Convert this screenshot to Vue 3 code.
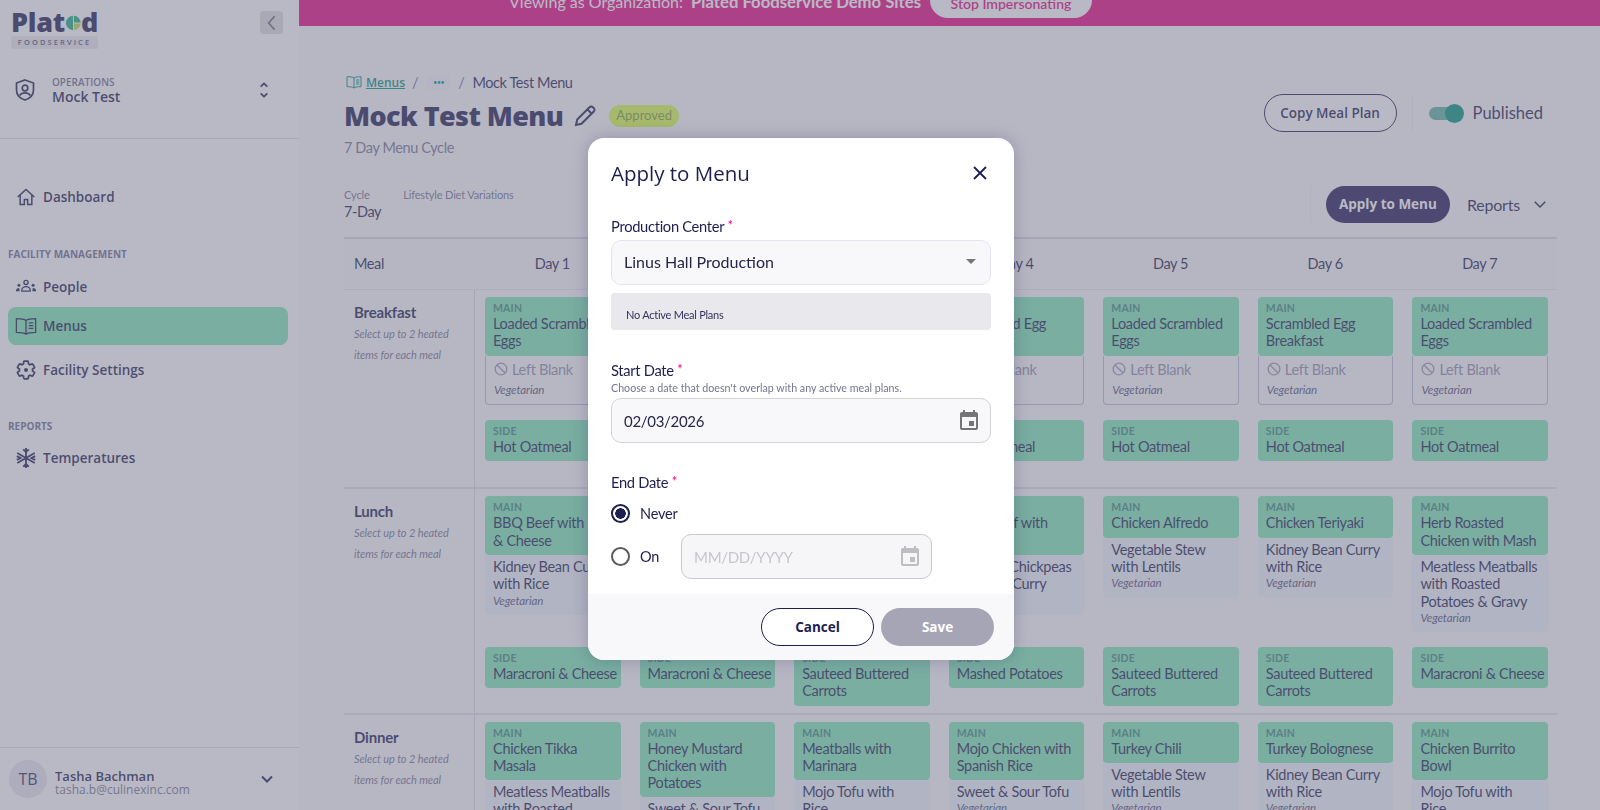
<script setup>
const days = [1, 2, 3, 4, 5, 6, 7];

const blank = { blank: true, veg: true };
const alt = (name, veg = true) => ({ name, veg });

const meals = [
  {
    name: "Breakfast",
    mains: [
      { name: "Loaded Scrambled Eggs", alt: blank },
      { name: "Loaded Scrambled Eggs", alt: blank },
      { name: "Scrambled Egg Breakfast", alt: blank },
      { name: "Scrambled Egg Breakfast", alt: blank },
      { name: "Loaded Scrambled Eggs", alt: blank },
      { name: "Scrambled Egg Breakfast", alt: blank },
      { name: "Loaded Scrambled Eggs", alt: blank },
    ],
    sides: ["Hot Oatmeal", "Hot Oatmeal", "Hot Oatmeal with Berries", "Hot Oatmeal", "Hot Oatmeal", "Hot Oatmeal", "Hot Oatmeal"],
  },
  {
    name: "Lunch",
    mains: [
      { name: "BBQ Beef with Mac & Cheese", alt: alt("Kidney Bean Curry with Rice") },
      { name: "Chicken Alfredo", alt: alt("Vegetable Stew with Lentils") },
      { name: "Chicken Teriyaki", alt: alt("Kidney Bean Curry with Rice") },
      { name: "BBQ Beef with Peppers", alt: alt("Roasted Chickpeas Coconut Curry") },
      { name: "Chicken Alfredo", alt: alt("Vegetable Stew with Lentils") },
      { name: "Chicken Teriyaki", alt: alt("Kidney Bean Curry with Rice") },
      { name: "Herb Roasted Chicken with Mash", alt: alt("Meatless Meatballs with Roasted Potatoes & Gravy") },
    ],
    sides: ["Maracroni & Cheese", "Maracroni & Cheese", "Sauteed Buttered Carrots", "Mashed Potatoes", "Sauteed Buttered Carrots", "Sauteed Buttered Carrots", "Maracroni & Cheese"],
  },
  {
    name: "Dinner",
    mains: [
      { name: "Chicken Tikka Masala", alt: alt("Meatless Meatballs with Roasted Potatoes") },
      { name: "Honey Mustard Chicken with Potatoes", alt: alt("Sweet & Sour Tofu") },
      { name: "Meatballs with Marinara", alt: alt("Mojo Tofu with Rice") },
      { name: "Mojo Chicken with Spanish Rice", alt: alt("Sweet & Sour Tofu") },
      { name: "Turkey Chili", alt: alt("Vegetable Stew with Lentils") },
      { name: "Turkey Bolognese", alt: alt("Kidney Bean Curry with Rice") },
      { name: "Chicken Burrito Bowl", alt: alt("Mojo Tofu with Rice") },
    ],
    sides: [],
  },
];
</script>

<template>
  <div class="app">
    <aside class="sidebar">
      <div class="brand">
        <div class="logo">
          <div class="logo-word">
            Plat<svg class="logo-e" viewBox="0 0 20 20">
              <path d="M9.4 0.5A9.5 9.5 0 0 0 9.4 19.5Z" fill="#1fae85" />
              <path d="M10.6 0.5A9.5 9.5 0 0 1 19.5 9.4H10.6Z" fill="#1fae85" />
              <path d="M10.6 10.6H19.5A9.5 9.5 0 0 1 10.6 19.5Z" fill="#b9dc4a" />
            </svg>d
          </div>
          <div class="logo-tag">FOODSERVICE</div>
        </div>
        <button class="collapse">
          <svg viewBox="0 0 24 24" width="20" height="20" fill="none" stroke="#6b6b80" stroke-width="2"><path d="M15 4l-7 8 7 8" /></svg>
        </button>
      </div>

      <div class="org">
        <svg class="org-icon" viewBox="0 0 24 24" width="24" height="24" fill="none" stroke="#1e1e50" stroke-width="1.7">
          <path d="M12 2l8.5 3v7c0 5-3.5 8.4-8.5 10-5-1.6-8.5-5-8.500-10V5z" />
          <circle cx="12" cy="10" r="2.8" />
          <path d="M6.5 17.5c1.500-2 3.500-2.700 5.500-2.700s4 .7 5.500 2.700" />
        </svg>
        <div class="org-text">
          <div class="org-label">OPERATIONS</div>
          <div class="org-name">Mock Test</div>
        </div>
        <svg class="org-sort" viewBox="0 0 12 24" width="10" height="20" fill="none" stroke="#1e1e50" stroke-width="2"><path d="M2 8l4-4 4 4M2 16l4 4 4-4" /></svg>
      </div>

      <nav class="nav">
        <a class="nav-item dash">
          <svg viewBox="0 0 24 24" width="20" height="20" fill="none" stroke="#1e1e50" stroke-width="1.8"><path d="M2 12L12 3l10 9M5 10v11h5v-6h4v6h5V10" /></svg>
          Dashboard
        </a>
        <div class="nav-head">FACILITY MANAGEMENT</div>
        <a class="nav-item">
          <svg viewBox="0 0 24 24" width="24" height="20" fill="#1e1e50">
            <circle cx="12" cy="6.5" r="2.5" fill="none" stroke="#1e1e50" stroke-width="1.6" />
            <path d="M7 17v-1.500c0-2.500 2.500-4 5-4s5 1.500 5 4V17z" fill="none" stroke="#1e1e50" stroke-width="1.6" />
            <circle cx="3.5" cy="10" r="1.8" /><circle cx="20.5" cy="10" r="1.8" />
            <path d="M0 17v-1c0-1.500 1.500-2.800 3.800-2.800L4.500 17zM24 17v-1c0-1.500-1.500-2.800-3.800-2.800L19.500 17z" />
          </svg>
          People
        </a>
        <a class="nav-item active">
          <svg viewBox="0 0 24 24" width="24" height="22" fill="none" stroke="#1e1e50" stroke-width="1.4"><path d="M12 6C10 4.500 6 4 1.500 4v15c4.500 0 8.500.5 10.500 2 2-1.500 6-2 10.500-2V4C18 4 14 4.500 12 6zM12 6v15M15 8.500h5M15 11.500h5M15 14.500h5" /></svg>
          Menus
        </a>
        <a class="nav-item">
          <svg viewBox="0 0 24 24" width="22" height="22" fill="none" stroke="#1e1e50" stroke-width="1.9">
            <path d="M19.14,12.94c0.04-0.3,0.06-0.61,0.06-0.94c0-0.32-0.02-0.64-0.07-0.94l2.03-1.58c0.18-0.14,0.23-0.41,0.12-0.61l-1.92-3.32c-0.12-0.22-0.37-0.29-0.59-0.22l-2.39,0.96c-0.5-0.38-1.03-0.7-1.62-0.94L14.4,2.81c-0.04-0.24-0.24-0.41-0.48-0.41h-3.84c-0.24,0-0.43,0.17-0.47,0.41L9.25,5.35C8.66,5.59,8.12,5.92,7.63,6.29L5.24,5.33c-0.22-0.08-0.47,0-0.59,0.22L2.74,8.87C2.62,9.08,2.66,9.34,2.86,9.48l2.03,1.58C4.84,11.36,4.8,11.69,4.8,12s0.02,0.64,0.07,0.94l-2.03,1.58c-0.18,0.14-0.23,0.41-0.12,0.61l1.92,3.32c0.12,0.22,0.37,0.29,0.59,0.22l2.39-0.96c0.5,0.38,1.03,0.7,1.62,0.94l0.36,2.54c0.05,0.24,0.24,0.41,0.48,0.41h3.84c0.24,0,0.44-0.17,0.47-0.41l0.36-2.54c0.59-0.24,1.13-0.56,1.62-0.94l2.39,0.96c0.22,0.08,0.47,0,0.59-0.22l1.92-3.32c0.12-0.22,0.07-0.47-0.12-0.61L19.14,12.94z" />
            <circle cx="12" cy="12" r="2.2" fill="#1e1e50" stroke="none" />
          </svg>
          Facility Settings
        </a>
        <div class="nav-head reports">REPORTS</div>
        <a class="nav-item">
          <svg viewBox="0 0 24 24" width="22" height="22" fill="none" stroke="#1e1e50" stroke-width="2">
            <path d="M12 1v22M2.500 6.500l19 11M21.500 6.500l-19 11M9 2.500l3 3 3-3M9 21.500l3-3 3 3M2 10l4 2-4 2M22 10l-4 2 4 2" />
          </svg>
          Temperatures
        </a>
      </nav>

      <div class="user">
        <div class="avatar">TB</div>
        <div class="user-text">
          <div class="user-name">Tasha Bachman</div>
          <div class="user-mail">tasha.b@culinexinc.com</div>
        </div>
        <svg viewBox="0 0 24 24" width="20" height="20" fill="none" stroke="#1e1e50" stroke-width="2.4"><path d="M6 9l6 6 6-6" /></svg>
      </div>
    </aside>

    <main class="main">
      <div class="banner">
        <span>Viewing as Organization:</span>
        <b>Plated Foodservice Demo Sites</b>
        <button class="stop">Stop Impersonating</button>
      </div>

      <div class="content">
        <header class="head">
          <div>
            <div class="crumbs">
              <svg viewBox="0 0 24 24" width="16" height="16" fill="none" stroke="#04947c" stroke-width="1.5"><path d="M12 6C10 4.500 6 4 1.500 4v15c4.500 0 8.500.5 10.500 2 2-1.500 6-2 10.500-2V4C18 4 14 4.500 12 6zM12 6v15M15 9h5M15 12h5M15 15h5" /></svg>
              <a class="crumb-link">Menus</a>
              <span class="slash">/</span>
              <span class="more">•••</span>
              <span class="slash">/</span>
              <span>Mock Test Menu</span>
            </div>
            <div class="title-row">
              <h1>Mock Test Menu</h1>
              <svg class="pencil" viewBox="0 0 24 24" width="24" height="24" fill="none" stroke="#1e1e50" stroke-width="2"><path d="M3 21l1.200-5.500L16.500 3.200a2.400 2.400 0 0 1 3.400 0l.9.9a2.400 2.400 0 0 1 0 3.400L8.500 19.800zM14.500 5.500l4 4" /></svg>
              <span class="pill">Approved</span>
            </div>
            <div class="subtitle">7 Day Menu Cycle</div>
          </div>
          <div class="head-actions">
            <button class="btn-outline">Copy Meal Plan</button>
            <span class="sep"></span>
            <div class="toggle"><span class="thumb"></span></div>
            <span class="published">Published</span>
          </div>
        </header>

        <div class="info-row">
          <div class="info">
            <div>
              <div class="info-label">Cycle</div>
              <div class="info-value">7-Day</div>
            </div>
            <div class="info-label">Lifestyle Diet Variations</div>
          </div>
          <div class="info-actions">
            <button class="btn-primary">Apply to Menu</button>
            <span class="reports-link">Reports</span>
            <svg viewBox="0 0 24 24" width="18" height="18" fill="none" stroke="#1e1e50" stroke-width="2"><path d="M5 9l7 7 7-7" /></svg>
          </div>
        </div>

        <div class="plan">
          <div class="plan-row plan-head">
            <div class="head-meal">Meal</div>
            <div v-for="d in days" :key="d" class="head-day">Day {{ d }}</div>
          </div>

          <div v-for="meal in meals" :key="meal.name" class="plan-row meal-row">
            <div class="meal-cell">
              <div class="meal-name">{{ meal.name }}</div>
              <div class="meal-hint">Select up to 2 heated items for each meal</div>
            </div>
            <div v-for="(m, i) in meal.mains" :key="i" class="cell main-cell">
              <div class="dish">
                <div class="dish-type">MAIN</div>
                <div class="dish-name">{{ m.name }}</div>
              </div>
              <div class="alt" :class="{ blank: m.alt.blank }">
                <div v-if="m.alt.blank" class="alt-name blank-name">
                  <svg viewBox="0 0 24 24" width="14" height="14" fill="none" stroke="#9c9cb2" stroke-width="2.4"><circle cx="12" cy="12" r="10" /><path d="M5 5l14 14" /></svg>
                  Left Blank
                </div>
                <div v-else class="alt-name">{{ m.alt.name }}</div>
                <div v-if="m.alt.veg" class="veg">Vegetarian</div>
              </div>
            </div>
            <div v-for="(s, i) in meal.sides" :key="'s' + i" class="cell side-cell">
              <div class="dish">
                <div class="dish-type">SIDE</div>
                <div class="dish-name">{{ s }}</div>
              </div>
            </div>
          </div>
        </div>
      </div>
    </main>

    <div class="overlay">
      <section class="modal">
        <div class="modal-body">
          <div class="modal-head">
            <h2>Apply to Menu</h2>
            <svg viewBox="0 0 24 24" width="24" height="24" fill="none" stroke="#1e1e50" stroke-width="1.8"><path d="M6 6l12 12M18 6L6 18" /></svg>
          </div>

          <label class="field-label">Production Center <i>*</i></label>
          <div class="input select">
            <span>Linus Hall Production</span>
            <span class="caret"></span>
          </div>
          <div class="notice">No Active Meal Plans</div>

          <label class="field-label start">Start Date <i>*</i></label>
          <div class="hint">Choose a date that doesn't overlap with any active meal plans.</div>
          <div class="input date">
            <span>02/03/2026</span>
            <svg viewBox="0 0 24 24" width="24" height="24" fill="#757575"><path d="M17 12h-5v5h5v-5zM16 1v2H8V1H6v2H5c-1.110 0-1.990.9-1.990 2L3 19c0 1.100.89 2 2 2h14c1.100 0 2-.9 2-2V5c0-1.100-.9-2-2-2h-1V1h-2zm3 18H5V8h14v11z" /></svg>
          </div>

          <label class="field-label end">End Date <i>*</i></label>
          <div class="radio-row never">
            <span class="radio on"></span>
            <span>Never</span>
          </div>
          <div class="radio-row">
            <span class="radio"></span>
            <span class="on-label">On</span>
            <div class="input date disabled">
              <span>MM/DD/YYYY</span>
              <svg viewBox="0 0 24 24" width="24" height="24" fill="#bdbdc2"><path d="M17 12h-5v5h5v-5zM16 1v2H8V1H6v2H5c-1.110 0-1.990.9-1.990 2L3 19c0 1.100.89 2 2 2h14c1.100 0 2-.9 2-2V5c0-1.100-.9-2-2-2h-1V1h-2zm3 18H5V8h14v11z" /></svg>
            </div>
          </div>
        </div>
        <footer class="modal-foot">
          <button class="btn-cancel">Cancel</button>
          <button class="btn-save">Save</button>
        </footer>
      </section>
    </div>
  </div>
</template>

<style>
html,
body {
  margin: 0;
  overflow: hidden;
}
</style>

<style scoped>
.app {
  display: flex;
  height: 810px;
  overflow: hidden;
  font-family: Lato, "Liberation Sans", sans-serif;
  color: #1e1e50;
  background: #fbfbfd;
}

button {
  font: inherit;
  cursor: pointer;
}

/* sidebar */
.sidebar {
  width: 299px;
  flex: none;
  display: flex;
  flex-direction: column;
  height: 810px;
  background: #ffffff;
  font-family: "Open Sans", sans-serif;
}

.brand {
  display: flex;
  justify-content: space-between;
  padding: 9px 16px 0 11px;
  height: 70px;
  box-sizing: border-box;
}

.logo {
  width: 87px;
}

.logo-word {
  display: flex;
  align-items: center;
  height: 26px;
  font-size: 27px;
  font-weight: 800;
  letter-spacing: -0.3px;
  line-height: 26px;
}

.logo-e {
  width: 16px;
  height: 20px;
  margin: 1px 0 0 1px;
}

.logo-tag {
  margin-top: 1px;
  height: 13px;
  line-height: 13px;
  background: #e8e8ee;
  border-radius: 2px;
  text-align: center;
  font-size: 7.5px;
  font-weight: 600;
  letter-spacing: 2.1px;
  color: #52527a;
}

.collapse {
  width: 23px;
  height: 23px;
  margin-top: 2px;
  padding: 0;
  border: none;
  border-radius: 4px;
  background: #dedee1;
  display: flex;
  align-items: center;
  justify-content: center;
}

.org {
  display: flex;
  align-items: center;
  height: 69px;
  border-bottom: 1px solid #dcdce6;
  padding: 0 30px 28px 13px;
  box-sizing: border-box;
}

.org-icon {
  margin-right: 15px;
}

.org-text {
  flex: 1;
}

.org-label {
  font-size: 10px;
  font-weight: 600;
  color: #6e6e92;
  line-height: 13px;
}

.org-name {
  font-size: 14px;
  font-weight: 600;
  line-height: 16px;
}

.nav {
  flex: 1;
  padding: 0 11px 0 8px;
}

.nav-item {
  display: flex;
  align-items: center;
  height: 37px;
  font-size: 13.5px;
  font-weight: 600;
  padding-left: 7px;
  border-radius: 8px;
}

.nav-item svg {
  width: 22px;
  margin-right: 6px;
  flex: none;
}

.nav-item.dash {
  margin-top: 39px;
  margin-bottom: 33px;
}

.nav-head {
  font-size: 10px;
  font-weight: 700;
  color: #6e6e92;
  line-height: 13px;
}

.nav-head + .nav-item {
  margin-top: 7px;
}

.nav-head.reports {
  margin-top: 32px;
}

.nav-head.reports + .nav-item {
  margin-top: 6px;
}

.nav-item.active {
  background: #7ce9b5;
  margin: 2px 0 6px;
  height: 38px;
}

.user {
  display: flex;
  align-items: center;
  height: 62px;
  border-top: 1px solid #dcdce6;
  padding: 0 22px 0 9px;
}

.avatar {
  width: 38px;
  height: 38px;
  border-radius: 50%;
  background: #e6e6ee;
  font-size: 16px;
  color: #32325f;
  display: flex;
  align-items: center;
  justify-content: center;
  margin-right: 8px;
}

.user-text {
  flex: 1;
  padding-top: 6px;
}

.user-name {
  font-size: 13px;
  font-weight: 600;
  line-height: 14px;
}

.user-mail {
  font-size: 12px;
  color: #757590;
  line-height: 13px;
}

/* main */
.main {
  flex: 1;
  min-width: 0;
  height: 810px;
  overflow: hidden;
}

.banner {
  height: 26px;
  box-sizing: border-box;
  background: #e70a82;
  color: #fff;
  display: flex;
  align-items: flex-end;
  gap: 6px;
  padding: 0 0 8px 210px;
  overflow: hidden;
  font-size: 16px;
  white-space: nowrap;
}

.banner span,
.banner b {
  line-height: 18px;
  margin-bottom: 7px;
}

.banner b {
  margin-left: 2px;
  font-size: 16.7px;
}

.stop {
  flex: none;
  height: 36px;
  width: 162px;
  margin-left: 3px;
  border: none;
  border-radius: 18px;
  background: #fff;
  color: #e70a82;
  font-weight: 600;
  font-size: 14px;
  padding: 0 0 6px;
  display: flex;
  align-items: flex-end;
  justify-content: center;
}

.content {
  padding: 46px 43px 0 45px;
}

.head {
  display: flex;
  justify-content: space-between;
  align-items: flex-start;
}

.crumbs {
  display: flex;
  align-items: center;
  gap: 6px;
  height: 20px;
  font-size: 14.5px;
  letter-spacing: -0.4px;
  padding-left: 2px;
}

.crumb-link {
  color: #04947c;
  text-decoration: underline;
  font-family: "Open Sans", sans-serif;
  font-size: 12px;
  font-weight: 600;
  letter-spacing: 0;
  margin-left: -2px;
}

.slash {
  color: #757590;
  margin: 0 2px 0 1px;
}

.more {
  background: #f4f4f8;
  color: #04947c;
  width: 23px;
  height: 15px;
  font-size: 7px;
  line-height: 15px;
  text-align: center;
  border-radius: 3px;
  margin: 0 1px;
}

.title-row {
  display: flex;
  align-items: center;
  height: 40px;
  margin-top: 4px;
}

h1 {
  margin: 0;
  font-family: "Open Sans", sans-serif;
  font-size: 27px;
  font-weight: 800;
  letter-spacing: -0.6px;
  line-height: 40px;
}

.pencil {
  margin: 0 12px 0 10px;
}

.pill {
  background: #d8ff4a;
  color: #849f40;
  border-radius: 11px;
  height: 22px;
  line-height: 21px;
  padding: 0 7px;
  font-size: 13px;
  margin-top: -1px;
}

.subtitle {
  font-size: 14.5px;
  letter-spacing: -0.4px;
  color: #757590;
  margin-top: 2px;
  line-height: 20px;
}

.head-actions {
  display: flex;
  align-items: center;
  margin-top: 22px;
}

.btn-outline {
  width: 133px;
  height: 38px;
  border: 1px solid #1e1e50;
  border-radius: 19px;
  background: #fff;
  color: #1e1e50;
  font-family: "Open Sans", sans-serif;
  font-size: 13.5px;
  font-weight: 600;
  padding: 0;
}

.sep {
  width: 1px;
  height: 38px;
  background: #eeeef2;
  margin: 0 16px 0 15px;
}

.toggle {
  position: relative;
  width: 31px;
  height: 13px;
  border-radius: 7px;
  background: #5fb3a4;
}

.thumb {
  position: absolute;
  right: -4px;
  top: -3px;
  width: 19px;
  height: 19px;
  border-radius: 50%;
  background: #04947c;
}

.published {
  font-size: 16.5px;
  margin: 0 14px 0 13px;
}

.info-row {
  display: flex;
  justify-content: space-between;
  align-items: flex-start;
  margin-top: 26px;
  height: 53px;
}

.info {
  display: flex;
  gap: 22px;
  padding-top: 3px;
}

.info-label {
  font-size: 11px;
  letter-spacing: -0.15px;
  color: #757590;
  line-height: 15px;
}

.info-value {
  font-size: 14.5px;
  letter-spacing: -0.4px;
  line-height: 20px;
}

.info-actions {
  display: flex;
  align-items: center;
  padding: 0 8px 0 15px;
  border-left: 1px solid #eeeef2;
  height: 38px;
  margin-top: 1px;
}

.btn-primary {
  width: 124px;
  height: 37px;
  border: none;
  border-radius: 19px;
  background: #211a55;
  color: #fff;
  font-family: "Open Sans", sans-serif;
  font-size: 13.5px;
  font-weight: 700;
  padding: 0;
  margin-right: 17px;
}

.reports-link {
  font-size: 16px;
  letter-spacing: -0.2px;
  margin-right: 11px;
}

.plan {
  border-top: 2px solid #d8d8e2;
}

.plan-row {
  display: grid;
  grid-template-columns: 131px repeat(7, minmax(0, 1fr));
}

.plan-head {
  height: 51px;
  padding-bottom: 2px;
  background: #f8f8fa;
  align-items: center;
  border-bottom: 1px solid #e6e6ee;
  box-sizing: border-box;
  font-size: 14.5px;
  letter-spacing: -0.4px;
}

.head-meal {
  padding-left: 10px;
}

.head-day {
  text-align: center;
}

.meal-row {
  border-bottom: 2px solid #e0e0e8;
}

.meal-cell {
  grid-row: span 2;
  padding: 13px 14px 0 10px;
  border-right: 1px solid #d8d8e2;
}

.meal-name {
  font-size: 15px;
  font-weight: 700;
  letter-spacing: -0.2px;
  line-height: 18px;
}

.meal-hint {
  font-size: 11px;
  letter-spacing: -0.1px;
  font-style: italic;
  color: #757590;
  line-height: 21px;
  margin-top: 2px;
}

.cell {
  padding: 0 9px 0 10px;
}

.main-cell {
  padding-top: 7px;
}

.side-cell {
  padding-top: 15px;
  padding-bottom: 7px;
}

/* breakfast row sits a bit taller than the others */
.meal-row:nth-child(2) .side-cell {
  padding-bottom: 9px;
}

.dish {
  background: #7ce9b5;
  border-radius: 4px;
  padding: 5px 2px 6px 8px;
}

.dish-type {
  font-size: 10.5px;
  font-weight: 700;
  letter-spacing: 0.2px;
  color: #3f8a7c;
  line-height: 12px;
}

.dish-name,
.alt-name {
  font-size: 14.5px;
  letter-spacing: -0.3px;
  line-height: 17.3px;
}

.dish-name {
  margin-top: 1px;
}

.alt {
  background: #eff4f8;
  border-radius: 0 0 4px 4px;
  padding: 3px 7px 6px 8px;
}

.alt.blank {
  background: transparent;
  border: 1px solid #bcbcd0;
  border-top: none;
  padding: 5px 7px 6px 8px;
}

.blank-name {
  color: #9090a8;
  display: flex;
  align-items: center;
  gap: 4px;
}

.veg {
  font-size: 11.5px;
  letter-spacing: -0.1px;
  font-style: italic;
  color: #52527a;
  line-height: 16px;
}

.blank .veg {
  margin-top: 4px;
}

/* modal */
.overlay {
  position: fixed;
  inset: 0;
  background: rgba(119, 119, 142, 0.515);
  z-index: 10;
}

.modal {
  position: absolute;
  left: 588px;
  top: 138px;
  width: 426px;
  height: 522px;
  display: flex;
  flex-direction: column;
  background: #fff;
  border-radius: 16px;
  overflow: hidden;
  box-shadow: 0 0 18px rgba(30, 30, 80, 0.25);
}

.modal-body {
  flex: 1;
  padding: 22px 23px 0;
}

.modal-head {
  display: flex;
  justify-content: space-between;
  align-items: center;
  height: 26px;
  margin-bottom: 30px;
}

.modal-head svg {
  margin-right: -1px;
}

h2 {
  margin: 0;
  font-family: "Open Sans", sans-serif;
  font-size: 20.5px;
  font-weight: 400;
  line-height: 26px;
}

.field-label {
  display: block;
  font-size: 14.7px;
  letter-spacing: -0.3px;
  line-height: 18px;
}

.field-label i {
  color: #e70a82;
  font-style: normal;
  font-size: 13px;
  vertical-align: 2px;
}

.input {
  display: flex;
  align-items: center;
  justify-content: space-between;
  height: 45px;
  box-sizing: border-box;
  border: 1px solid #e4e4ef;
  border-radius: 10px;
  background: #f8f8fb;
  padding: 0 9px 0 12px;
  font-size: 16px;
  color: #26264a;
}

.select {
  margin-top: 5px;
  padding-right: 14px;
  padding-bottom: 2px;
}

.caret {
  width: 0;
  height: 0;
  border-left: 5px solid transparent;
  border-right: 5px solid transparent;
  border-top: 5px solid #757575;
}

.notice {
  margin-top: 8px;
  height: 37px;
  line-height: 44px;
  background: #e8e8ed;
  border-radius: 4px;
  padding-left: 15px;
  font-size: 11px;
  letter-spacing: -0.25px;
  color: #33335c;
}

.start {
  margin-top: 30px;
}

.hint {
  font-size: 10.7px;
  line-height: 14px;
  color: #757590;
  margin-top: 2px;
  margin-bottom: 3px;
}

.date {
  border-color: #d3d3d8;
  font-size: 15px;
  letter-spacing: -0.3px;
}

.end {
  margin-top: 29px;
}

.radio-row {
  display: flex;
  align-items: center;
  font-size: 14.5px;
  letter-spacing: -0.2px;
  height: 45px;
}

.never {
  height: 22px;
  margin-top: 11px;
  margin-bottom: 10px;
}

.radio {
  width: 19px;
  height: 19px;
  box-sizing: border-box;
  border: 2px solid #5a5a5a;
  border-radius: 50%;
  margin-right: 10px;
  flex: none;
}

.radio.on {
  border-color: #1e1e50;
  background: radial-gradient(circle, #1e1e50 0 5px, #fff 5.5px);
}

.on-label {
  width: 41px;
}

.disabled {
  width: 251px;
  flex: none;
  color: #c6c6cc;
  background: #f6f6f8;
  border-color: #c9c9cf;
}

.modal-foot {
  height: 66px;
  box-sizing: border-box;
  background: #f8f8fb;
  display: flex;
  justify-content: flex-end;
  gap: 7px;
  padding: 14px 20px 0 0;
}

.btn-cancel,
.btn-save {
  width: 113px;
  height: 38px;
  border-radius: 19px;
  font-family: "Open Sans", sans-serif;
  font-size: 13.5px;
  font-weight: 700;
  padding: 0;
}

.btn-cancel {
  background: #fff;
  color: #1e1e50;
  border: 1px solid #1e1e50;
}

.btn-save {
  background: #a6a5b5;
  color: #fff;
  border: none;
}
</style>
